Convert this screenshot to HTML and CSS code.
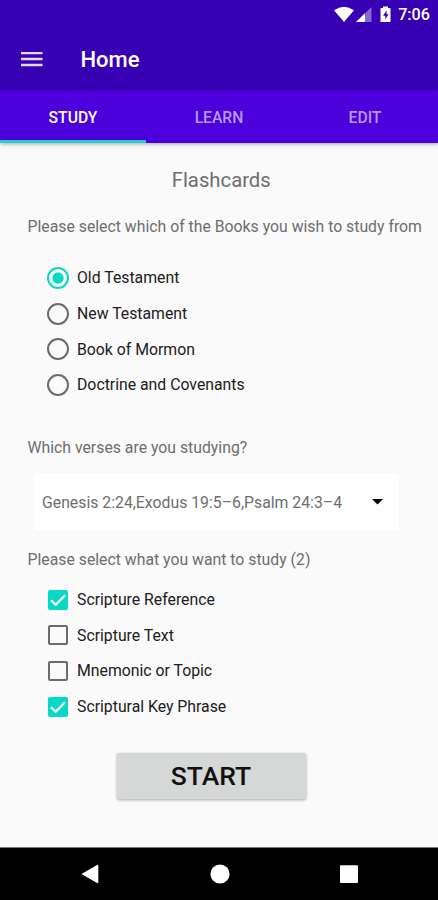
FILE: index.html
```
<!DOCTYPE html>
<html lang="en">
<head>
    <meta charset="UTF-8">
    <meta name="viewport" content="width=device-width, initial-scale=1.0">
    <title>Home</title>
    <link rel="stylesheet" href="styles.css">
</head>
<body>
    <header class="header">
        <div class="status-bar">
            <svg width="60" height="18" viewBox="0 0 60 18">
                <path d="M0 4.2Q10 -2.800 20 4.200L10 16Z" fill="#fff"/>
                <path d="M22 16L37.500 1V16Z" fill="#fff" opacity=".4"/>
                <path d="M22 16L31 7.300V16Z" fill="#fff"/>
                <path d="M46.500 2H49V.5H54V2H56.500V16H46.500Z" fill="#fff"/>
                <path d="M52.600 4.500L49 9.800H51.300V13.500L54.600 8.200H52.600Z" fill="#3700b3"/>
            </svg>
            <span class="clock">7:06</span>
        </div>
        <div class="toolbar">
            <svg width="22" height="16" viewBox="0 0 22 16">
                <path d="M0 1H21.500M0 7H21.500M0 13H21.500" stroke="#e4daf6" stroke-width="2.600"/>
            </svg>
            <h1>Home</h1>
        </div>
    </header>
    <nav class="tabs">
        <a class="tab active">STUDY</a>
        <a class="tab">LEARN</a>
        <a class="tab">EDIT</a>
    </nav>

    <main class="content">
        <h2>Flashcards</h2>
        <p class="question books">Please select which of the Books you wish to study from</p>
        <div class="options">
            <label><input type="radio" name="book" checked><span>Old Testament</span></label>
            <label><input type="radio" name="book"><span>New Testament</span></label>
            <label><input type="radio" name="book"><span>Book of Mormon</span></label>
            <label><input type="radio" name="book"><span>Doctrine and Covenants</span></label>
        </div>

        <p class="question verses">Which verses are you studying?</p>
        <div class="spinner">
            <span>Genesis 2:24,Exodus 19:5–6,Psalm 24:3–4</span>
            <svg width="11" height="6" viewBox="0 0 11 6"><path d="M0 0H11L5.500 5.500Z"/></svg>
        </div>

        <p class="question parts">Please select what you want to study (2)</p>
        <div class="options">
            <label><input type="checkbox" checked><svg class="check" viewBox="0 0 22 22"><path d="M4 11.200L8.700 15.700L18 6.300"/></svg><span>Scripture Reference</span></label>
            <label><input type="checkbox"><span>Scripture Text</span></label>
            <label><input type="checkbox"><span>Mnemonic or Topic</span></label>
            <label><input type="checkbox" checked><svg class="check" viewBox="0 0 22 22"><path d="M4 11.200L8.700 15.700L18 6.300"/></svg><span>Scriptural Key Phrase</span></label>
        </div>
        <button type="button" class="start">START</button>
    </main>

    <footer class="nav-bar">
        <svg width="18" height="20" viewBox="0 0 18 20"><path d="M.5 10L16 1Q17.300 .5 17.300 2V18Q17.300 19.500 16 19Z"/></svg>
        <svg width="20" height="20" viewBox="0 0 20 20"><circle cx="10" cy="10" r="9.600"/></svg>
        <svg width="18" height="20" viewBox="0 0 18 20"><rect y="1.300" width="18" height="17.700" rx="1"/></svg>
    </footer>
</body>
</html>
```
FILE: styles.css
```
* {
    box-sizing: border-box;
}

body {
    display: flex;
    flex-direction: column;
    height: 900px;
    margin: 0;
    font-family: Roboto, sans-serif;
    font-size: 15.8px;
    background-color: #fafafa;
    color: #6e6e6e;
}

h1, h2, p {
    margin: 0;
}

.header {
    height: 90px;
    background-color: #3700b3;
    color: #fff;
}

.status-bar {
    display: flex;
    justify-content: flex-end;
    align-items: center;
    gap: 4px;
    height: 29px;
    padding-right: 8px;
}

.clock {
    font-size: 16.2px;
    font-weight: 500;
}

.toolbar {
    display: flex;
    align-items: center;
    gap: 37.5px;
    height: 61px;
    padding-left: 21px;
}

h1 {
    font-size: 22px;
    font-weight: 500;
}

.tabs {
    display: grid;
    grid-template-columns: repeat(3, 1fr);
    height: 53px;
    background-color: #4b00dc;
    box-shadow: 0 1px 4px rgba(0, 0, 0, 0.35);
}

.tab {
    display: flex;
    align-items: center;
    justify-content: center;
    padding-top: 5px;
    border-bottom: 3px solid transparent;
    font-size: 15.7px;
    font-weight: 500;
    color: #b899f1;
}

.tab.active {
    color: #fff;
    border-bottom-color: #2bcbd5;
}

.content {
    display: flex;
    flex-direction: column;
    flex: 1;
    padding: 24px 6px 0 27.5px;
}

h2 {
    padding-left: 6px;
    padding-right: 23px;
    text-align: center;
    font-size: 20.3px;
    font-weight: 400;
    line-height: 27px;
}

.question {
    line-height: 20px;
    white-space: nowrap;
}

.books {
    margin: 23px 0 23px;
}

.verses {
    margin: 35px 0 15px;
}

.parts {
    margin: 20px 0 12px;
}

.options label {
    display: flex;
    align-items: center;
    gap: 8px;
    height: 35.7px;
    padding-left: 19.5px;
    color: #202020;
}

.options input {
    appearance: none;
    width: 22px;
    height: 22px;
    margin: 0;
    border: 2px solid #6b6b6b;
    border-radius: 50%;
}

.options input[type="checkbox"] {
    width: 20px;
    height: 20px;
    margin: 0 1px;
    border-radius: 2px;
}

.options input:checked {
    border-color: #08d8c4;
    background: radial-gradient(circle, #08d8c4 5.2px, transparent 6px);
}

.options input[type="checkbox"]:checked {
    background: #08d8c4;
}

.check {
    width: 22px;
    height: 22px;
    margin-left: -30px;
    fill: none;
    stroke: #fff;
    stroke-width: 2.2;
}

.spinner {
    display: flex;
    align-items: center;
    justify-content: space-between;
    width: 365px;
    height: 57px;
    margin-left: 6.5px;
    padding: 2px 16px 0 8px;
    border-radius: 4px;
    background-color: #fff;
}

.start {
    width: 189px;
    height: 46px;
    margin: 28px 0 0 89px;
    padding: 0;
    border: none;
    border-radius: 2px;
    background-color: #d6d7d7;
    box-shadow: 0 1px 3px rgba(0, 0, 0, 0.35);
    font-family: inherit;
    font-size: 26.5px;
    font-weight: 500;
    color: #111;
}

.nav-bar {
    display: flex;
    align-items: center;
    justify-content: space-between;
    height: 53px;
    padding: 0 80px 0 81px;
    border-top: 1px solid #777;
    background-color: #000;
    fill: #fff;
}
```
